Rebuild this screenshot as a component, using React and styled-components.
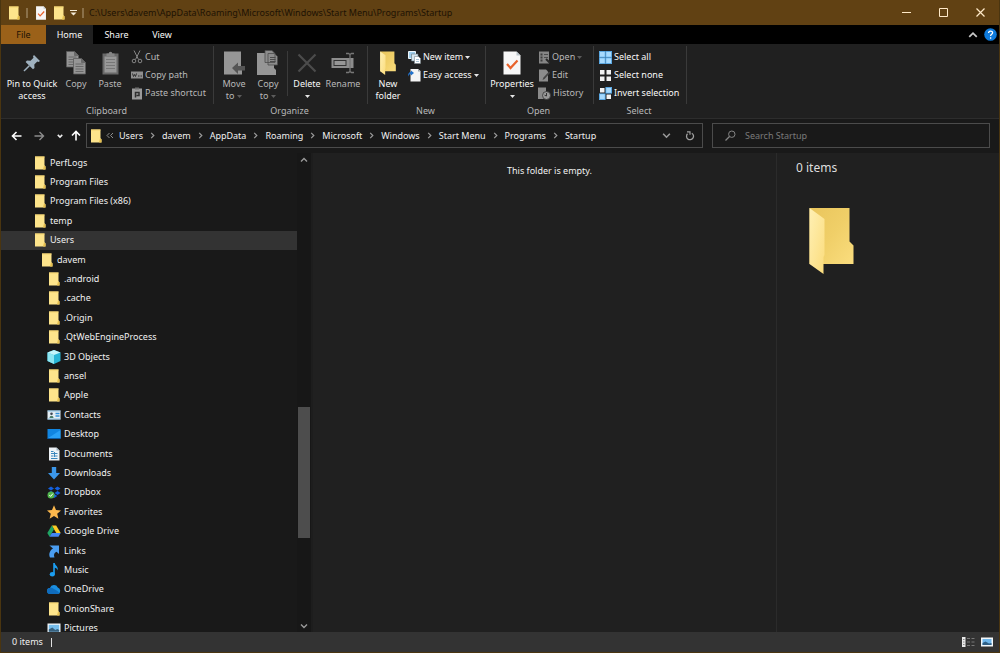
import React from 'react';
import styled, { createGlobalStyle } from 'styled-components';

const GlobalStyle = createGlobalStyle`
    * {
        box-sizing: border-box;
    }
    body {
        margin: 0;
        background: #000;
    }
    button, input {
        font: inherit;
        color: inherit;
        background: none;
        border: 0;
        padding: 0;
        margin: 0;
    }
    svg {
        display: block;
        flex: none;
    }
`
const Window = styled.div`
    height: 100vh;
    display: flex;
    flex-direction: column;
    background: #191919;
    border: 1px solid #4a3510;
    border-top: 0;
    color: #f0f0f0;
    font-family: "Noto Sans", "Open Sans", sans-serif;
    font-size: 9px;
    line-height: 12px;
`
const TitleBar = styled.header`
    display: flex;
    align-items: center;
    height: 25px;
    flex: none;
    padding-left: 6px;
    background: #614113;
`
const QuickButton = styled.button`
    display: flex;
    margin-right: ${({ $gap }) => $gap || 0}px;
`
const TitleMark = styled.span`
    width: 2px;
    height: 10px;
    margin-right: ${({ $gap }) => $gap || 0}px;
    background: #8a7049;
`
const Title = styled.h1`
    flex: 1;
    margin: 0;
    font-size: 9px;
    font-weight: 400;
    line-height: 12px;
    color: #1d1204;
    white-space: nowrap;
`
const WindowButton = styled.button`
    display: flex;
    align-items: center;
    justify-content: center;
    width: 37px;
    height: 25px;
`
const Tabs = styled.nav`
    display: flex;
    align-items: stretch;
    height: 19px;
    flex: none;
    background: #000;
`
const Tab = styled.button`
    width: ${({ $width }) => $width || 47}px;
    color: ${({ $file }) => ($file ? '#1d1204' : '#f8f8f8')};
    background: ${({ $file, $active }) => ($file ? '#9b6119' : $active ? '#202020' : 'none')};
`
const TabTools = styled.div`
    display: flex;
    align-items: center;
    gap: 6px;
    margin-left: auto;
    padding-right: 2px;
`
const Ribbon = styled.section`
    display: flex;
    height: 75px;
    flex: none;
    padding: 2px 0 0 1px;
    background: #202020;
    border-bottom: 1px solid #2d2d2d;
`
const Group = styled.div`
    display: flex;
    flex-direction: column;
    width: ${({ $width }) => $width}px;
    padding: 2px 3px 0;
    background: linear-gradient(#3a3a3a, #3a3a3a) right top / 1px 58px no-repeat;
`
const GroupBody = styled.div`
    display: flex;
    height: 54px;
`
const GroupName = styled.div`
    padding: 3px 3px 0 0;
    text-align: center;
    color: #b8b8b8;
`
const BigButton = styled.button`
    display: flex;
    flex-direction: column;
    align-items: center;
    flex: none;
    width: ${({ $width }) => $width}px;
    white-space: nowrap;
    color: ${({ $dim }) => ($dim ? '#b8b8b8' : '#f8f8f8')};
`
const BigIcon = styled.span`
    display: flex;
    align-items: center;
    height: 30px;
`
const CaretLine = styled.span`
    display: flex;
    align-items: center;
    justify-content: center;
    gap: 3px;
    height: 12px;
`
const Divider = styled.span`
    width: 1px;
    height: 45px;
    margin: 3px 2px 0;
    background: #3a3a3a;
`
const SmallList = styled.div`
    display: flex;
    flex-direction: column;
    padding-left: ${({ $pad }) => $pad || 4}px;
`
const SmallButton = styled.button`
    display: flex;
    align-items: center;
    gap: 2px;
    height: 18px;
    white-space: nowrap;
    color: ${({ $dim }) => ($dim ? '#b8b8b8' : '#f8f8f8')};
`
const AddressRow = styled.div`
    display: flex;
    align-items: center;
    flex: none;
    height: 34px;
    padding: 0 9px 1px 8px;
`
const NavButton = styled.button`
    display: flex;
    justify-content: center;
    width: ${({ $width }) => $width}px;
`
const AddressBox = styled.div`
    display: flex;
    align-items: center;
    flex: 1;
    height: 25px;
    margin-right: 9px;
    padding: 0 3px 0 2px;
    border: 1px solid #4b4b4b;
`
const Crumbs = styled.ol`
    display: flex;
    align-items: center;
    flex: 1;
    margin: 0;
    padding: 0 0 0 3px;
    list-style: none;
`
const Crumb = styled.li`
    display: flex;
    align-items: center;
    white-space: nowrap;
`
const CrumbArrow = styled.span`
    display: flex;
    justify-content: center;
    width: 19px;
`
const SearchBox = styled.label`
    display: flex;
    align-items: center;
    gap: 9px;
    width: 278px;
    height: 25px;
    padding-left: 12px;
    border: 1px solid #4b4b4b;
`
const SearchInput = styled.input`
    flex: 1;
    min-width: 0;
    outline: 0;
    &::placeholder {
        color: #7a7a7a;
        opacity: 1;
    }
`
const Body = styled.div`
    display: flex;
    flex: 1;
    min-height: 0;
`
const Sidebar = styled.aside`
    display: flex;
    width: 312px;
    flex: none;
    overflow: hidden;
    border-right: 2px solid #1d1d1d;
`
const Tree = styled.ul`
    display: grid;
    grid-auto-rows: 1fr;
    flex: 1;
    height: calc(100% + 6px);
    margin: 0;
    padding: 0;
    list-style: none;
`
const TreeItem = styled.li`
    display: flex;
    padding-left: ${({ $level }) => 32 + $level * 7}px;
    background: ${({ $selected }) => ($selected ? '#333333' : 'none')};
`
const TreeButton = styled.button`
    display: flex;
    align-items: center;
    gap: 3px;
    white-space: nowrap;
`
const ScrollBar = styled.div`
    display: flex;
    flex-direction: column;
    align-items: center;
    width: 14px;
    padding: 3px 0 2px;
    background: #171717;
`
const ScrollTrack = styled.div`
    display: flex;
    flex-direction: column;
    flex: 1;
    width: 12px;
`
const ScrollSpace = styled.div`
    flex: ${({ $grow }) => $grow};
`
const ScrollThumb = styled(ScrollSpace)`
    background: #4d4d4d;
`
const Files = styled.main`
    flex: 1;
    padding: 12px 0 0 10px;
    background: #202020;
    text-align: center;
`
const Details = styled.aside`
    width: 223px;
    padding: 6px 0 0 19px;
    background: #202020;
    border-left: 1px solid #2b2b2b;
`
const DetailsTitle = styled.h2`
    margin: 0 0 30px;
    font-size: 12px;
    font-weight: 400;
    line-height: 18px;
    color: #dedede;
`
const DetailsPreview = styled.div`
    padding-left: 13px;
`
const StatusBar = styled.footer`
    display: flex;
    align-items: center;
    height: 20px;
    flex: none;
    padding: 0 6px 0 11px;
    background: #333333;
`
const StatusMark = styled.span`
    width: 1px;
    height: 9px;
    margin-left: 8px;
    background: #e0e0e0;
`
const ViewButtons = styled.div`
    display: flex;
    gap: 6px;
    margin-left: auto;
`

const Caret = ({ color = '#e6e6e6' }) => (
    <svg width="5" height="3" viewBox="0 0 5 3"><path d="M0 0h5L2.5 3z" fill={color} /></svg>
)
const Chevron = ({ dir = 'down', color = '#9a9a9a', size = 8, width = 1.4 }) => {
    const turn = { down: 0, up: 180, right: -90 }[dir]
    return (
        <svg width={size} height={size} viewBox="0 0 8 8">
            <path d="M1 2.5L4 5.5L7 2.5" fill="none" stroke={color} strokeWidth={width} transform={`rotate(${turn} 4 4)`} />
        </svg>
    )
}
const FolderIcon = ({ width = 14, height = 14 }) => (
    <svg width={width} height={height} viewBox="0 0 14 14">
        <path d="M2 .5h9.5v8.800l1 1v3.200H2z" fill="#fde48b" />
        <path d="M11 9.500l1.500 1v3H10z" fill="#e6bf4e" />
        <path d="M2 .5h9.500v1H2z" fill="#f3d36c" />
    </svg>
)
const OpenFolder = ({ width, height }) => (
    <svg width={width} height={height} viewBox="0 0 45 67">
        <defs>
            <linearGradient id="folderBack" x1="0" y1="0" x2="1" y2="1">
                <stop offset="0" stopColor="#e9c55c" />
                <stop offset=".5" stopColor="#f0cf68" />
                <stop offset="1" stopColor="#fadd7e" />
            </linearGradient>
            <linearGradient id="folderFront" x1="0" y1="0" x2="1" y2="1">
                <stop offset="0" stopColor="#fff0b4" />
                <stop offset="1" stopColor="#fbdc7c" />
            </linearGradient>
        </defs>
        <path d="M.5 1H40.500V34.500L44.500 38.500V57H.5z" fill="url(#folderBack)" />
        <path d="M.5 1L15.500 12V48L14.500 50V67L.5 57z" fill="url(#folderFront)" />
    </svg>
)
const PropsIcon = ({ width, height }) => (
    <svg width={width} height={height} viewBox="0 0 18 24">
        <path d="M.5.500h13l4 4v19H.5z" fill="#f6f6f6" />
        <path d="M13.500.5v4h4z" fill="#b9c3c9" />
        <path d="M4 13l3.500 4L14.500 9.500" fill="none" stroke="#e8622a" strokeWidth="2.200" />
    </svg>
)
const PinIcon = () => (
    <svg width="18" height="18" viewBox="0 0 18 18">
        <path d="M11 1l6 6-1.500 1-1.200-.5-3 3 .2 3.500-1.500 1.300-7.400-7.400L4 6.500l3.500.2 3-3L10 2.300z" fill="#9fb1bf" />
        <path d="M6.300 11.700L1 17" stroke="#9fb1bf" strokeWidth="1.500" />
    </svg>
)
const Sheet = ({ x, y }) => (
    <g transform={`translate(${x} ${y})`}>
        <path d="M.5.500h8l4 4v11.500H.5z" fill="#959595" stroke="#5c5c5c" strokeWidth=".8" />
        <path d="M8.500.5v4h4" fill="#6a6a6a" stroke="#5c5c5c" strokeWidth=".6" />
        <path d="M2.500 6h8M2.500 8.500h8M2.500 11h8M2.500 13.500h8" stroke="#696969" />
    </g>
)
const CopyIcon = () => (
    <svg width="20" height="24" viewBox="0 0 20 24">
        <Sheet x={0} y={0} />
        <Sheet x={7} y={7} />
    </svg>
)
const PasteIcon = () => (
    <svg width="17" height="24" viewBox="0 0 17 24">
        <path d="M.5 2.500h16v21H.5z" fill="#696969" />
        <path d="M2.500 5.500h12v16h-12z" fill="#989898" />
        <path d="M4.500 5V2.500h2.200a1.800 1.800 0 013.600 0h2.200V5z" fill="#858585" />
        <path d="M4 8.500h9M4 11.500h9M4 14.500h9M4 17.500h9" stroke="#777" />
    </svg>
)
const CutIcon = () => (
    <svg width="12" height="14" viewBox="0 0 12 14" fill="none" stroke="#858585">
        <path d="M3 .5l4.500 9M9 .500L4.500 9.500" />
        <circle cx="3" cy="11" r="1.800" />
        <circle cx="9" cy="11" r="1.800" />
    </svg>
)
const CopyPathIcon = () => (
    <svg width="12" height="12" viewBox="0 0 12 12">
        <path d="M0 2.500h12v7H0z" fill="#8f8f8f" />
        <path d="M1.500 4.500l1 3 1-2 1 2 1-3M7 7h1.500M9.500 7H11" fill="none" stroke="#2c2c2c" />
    </svg>
)
const PasteShortcutIcon = () => (
    <svg width="12" height="13" viewBox="0 0 12 13">
        <path d="M1 1.500h10v11H1z" fill="#9b9b9b" />
        <path d="M4 .5h4v2H4z" fill="#6e6e6e" />
        <path d="M4.500 10.500V5.500h3.500v3H5.500" fill="none" stroke="#2f2f2f" strokeWidth="1.500" />
    </svg>
)
const MoveToIcon = () => (
    <svg width="22" height="24" viewBox="0 0 22 24">
        <path d="M1 .5h17v17l1 1v5H1z" fill="#969696" />
        <path d="M9 17l6-5.500v3.500h7v4.500h-7V23z" fill="#555" />
    </svg>
)
const CopyToIcon = () => (
    <svg width="22" height="26" viewBox="0 0 22 26">
        <path d="M0 3h17v15l2 2v5H0z" fill="#969696" />
        <path d="M8 .5h7l3 3v9H8zM11 3.500h6.500l3 3v8.500H11z" fill="#8c8c8c" stroke="#4c4c4c" strokeWidth=".8" />
        <path d="M13 7.500h5.500M13 9.500h5.500M13 11.500h5.500" stroke="#4c4c4c" />
    </svg>
)
const DeleteIcon = () => (
    <svg width="20" height="20" viewBox="0 0 20 20">
        <path d="M1.500 1.500l17 17M18.500 1.500l-17 17" stroke="#4c4c4c" strokeWidth="2.200" />
    </svg>
)
const RenameIcon = () => (
    <svg width="24" height="22" viewBox="0 0 24 22">
        <path d="M.5 6h22v10H.5z" fill="#8d8d8d" />
        <path d="M2.500 8h13v6h-13z" fill="#333" />
        <path d="M3.500 9h11v4h-11z" fill="#969696" />
        <path d="M15 1.500h2.500l1.500 1 1.500-1H23M15 20.500h2.500l1.500-1 1.500 1H23M19 2v18" fill="none" stroke="#777" strokeWidth="1.300" />
    </svg>
)
const NewItemIcon = () => (
    <svg width="13" height="13" viewBox="0 0 13 13">
        <path d="M.5.500h7v7h-7z" fill="#9fcdec" stroke="#eef6fb" />
        <path d="M3.500 3h6.500v7H3.500z" fill="#d7e6ee" stroke="#61757f" strokeWidth=".6" />
        <path d="M6.500 5.500h4l2 2v5h-6z" fill="#fff" stroke="#7a878e" strokeWidth=".6" />
        <path d="M8 8.500h3M8 10.500h3" stroke="#90b4ca" strokeWidth=".8" />
    </svg>
)
const EasyAccessIcon = () => (
    <svg width="13" height="14" viewBox="0 0 13 14">
        <path d="M2.500 1H10l2.500 2v10.500h-10z" fill="#f4f4f4" />
        <path d="M10 1v2.500h2.500z" fill="#9aa6ad" />
        <path d="M0 8.500c0-3 .8-4.300 3-4.500V2.500L6 5 3 7.500V6C1.800 6 .8 6.800 0 8.500z" fill="#2272cc" />
    </svg>
)
const OpenIcon = () => (
    <svg width="12" height="13" viewBox="0 0 12 13">
        <path d="M1 .5h10v12H1z" fill="#868686" />
        <path d="M2.500 2.500h2v2h-2zM2.500 5.500h2v2h-2zM2.500 8.500h2v2h-2z" fill="#3e3e3e" />
        <path d="M6 3.500h4M6 6.500h4" stroke="#4c4c4c" />
        <path d="M8 8l4 4" stroke="#2a2a2a" strokeWidth="2" />
    </svg>
)
const EditIcon = () => (
    <svg width="12" height="13" viewBox="0 0 12 13">
        <path d="M1 .5h7l2 2v10H1z" fill="#8c8c8c" />
        <path d="M4.500 11l1-2.500L11 2.500l1.200 1.300L6.500 10z" fill="#444" />
    </svg>
)
const HistoryIcon = () => (
    <svg width="13" height="13" viewBox="0 0 13 13">
        <path d="M0 .5h8v9l1 1v1.500H0z" fill="#8a8a8a" />
        <circle cx="8.500" cy="8.500" r="4" fill="#999" stroke="#333" strokeWidth=".8" />
        <path d="M8.500 6v3l-2-.8" fill="none" stroke="#333" />
    </svg>
)
const SelectIcon = ({ blue = [] }) => (
    <svg width="13" height="13" viewBox="0 0 13 13">
        {[[0, 0], [6.5, 0], [0, 6.5], [6.5, 6.5]].map(([x, y], i) => (
            blue.includes(i)
                ? <rect key={i} x={x + 0.4} y={y + 0.4} width="5.700" height="5.700" fill="#a8dafd" stroke="#58aef0" strokeWidth=".8" />
                : <rect key={i} x={x + 1} y={y + 1} width="4.500" height="4.500" fill="#f2f2f2" />
        ))}
    </svg>
)

const treeIcons = {
    cube: (
        <>
            <path d="M7 0l6.500 2.500v8.500L7 14 .5 11V2.500z" fill="#29b6d6" />
            <path d="M.5 2.500L7 5v9L.5 11z" fill="#8ce6f2" />
            <path d="M7 0l6.500 2.500L7 5 .5 2.500z" fill="#c4f5fa" />
        </>
    ),
    contacts: (
        <>
            <path d="M.5 2.500h13v9H.5z" fill="#e4eef5" />
            <path d="M.5 2.500h13v1H.5zM.5 10.500h13v1H.5z" fill="#82bbe0" />
            <circle cx="4.500" cy="5.800" r="1.300" fill="#3b4652" />
            <path d="M2.500 10c0-3 4-3 4 0z" fill="#4b7d69" />
            <path d="M8.500 5.500h4M8.500 8h4" stroke="#3190d8" strokeWidth="1.300" />
        </>
    ),
    desktop: (
        <>
            <path d="M.5 2h13v9.500H.5z" fill="#1185e0" />
            <path d="M.5 11.500L13.500 3v8.500z" fill="#29a0f5" />
            <path d="M.5 11h13v1H.5z" fill="#0c5da5" />
        </>
    ),
    documents: (
        <>
            <path d="M2 .5h7.500l3 3v10H2z" fill="#edf2f6" />
            <path d="M9.500.5v3h3z" fill="#9fb3c1" />
            <path d="M4 4.500h2.500M4 6.500h6.500M4 9h2.500M8 9h2.500M4 11.500h6.500M7.500 5v5" stroke="#3a86bd" />
        </>
    ),
    downloads: <path d="M4.800 1h4.400v6H13L7 13.500 1 7h3.800z" fill="#3b97ea" />,
    dropbox: (
        <>
            <path d="M4 1.500l3 2-3 2-3-2zM10.500 1.500l3 2-3 2-3-2zM4 6l3 2-3 2-3-2zM10.500 6l3 2-3 2-3-2zM7.300 9l3 2-3 2-3-2z" fill="#1461e0" />
            <circle cx="4" cy="10" r="3.500" fill="#52b54b" />
            <path d="M2.300 10l1.300 1.400 2.300-2.800" fill="none" stroke="#fff" />
        </>
    ),
    favorites: <path d="M7 .3l2 4.600 5 .5-3.800 3.300 1.200 5L7 11.100l-4.400 2.600 1.200-5L0 5.400l5-.5z" fill="#fdb94d" />,
    drive: (
        <>
            <path d="M4.800 1.500h4.400l4.500 7.500H9.300z" fill="#fbc924" />
            <path d="M4.800 1.500L7 5.300 2.500 12.700.3 9z" fill="#1fa463" />
            <path d="M4.800 9h8.900l-2.200 3.700h-9z" fill="#4285f4" />
        </>
    ),
    links: <path d="M2.500 1.500h9.500V10L9.500 7.800C7 9 6.500 11 7.500 13.500H3C1.500 10.500 2.500 6.500 6 4.500z" fill="#4a9df0" />,
    music: (
        <>
            <path d="M6.200 0h1.600c.3 2.600 3.700 3.200 3 7.500-.6-2-1.800-2.700-3-2.800V11H6.200z" fill="#1b9df0" />
            <ellipse cx="5.300" cy="11.200" rx="2.600" ry="2.200" fill="#1b9df0" />
        </>
    ),
    onedrive: (
        <>
            <path d="M3 6a4.200 4.200 0 017.800-.6A3.500 3.500 0 0111 12H3.200A3 3 0 013 6z" fill="#1a8ee0" />
            <path d="M3 6c2-.6 3 .4 8 3.600l1.500 1.900c-.4.400-.9.500-1.500.5H3.200A3 3 0 013 6z" fill="#0f6cbd" />
        </>
    ),
    pictures: (
        <>
            <path d="M.5 2.500h13v9.500H.5z" fill="#f2f6f8" />
            <path d="M1.800 3.800h10.400v6.900H1.800z" fill="#75bdec" />
            <path d="M1.800 8.500l3.500-2 3 2.500 2-1 1.900 1v1.700H1.800z" fill="#37607c" />
        </>
    ),
}

const TreeIcon = ({ name }) => (
    name === 'folder' ? <FolderIcon /> : <svg width="14" height="14" viewBox="0 0 14 14">{treeIcons[name]}</svg>
)

const treeItems = [
    ['PerfLogs', 0],
    ['Program Files', 0],
    ['Program Files (x86)', 0],
    ['temp', 0],
    ['Users', 0],
    ['davem', 1],
    ['.android', 2],
    ['.cache', 2],
    ['.Origin', 2],
    ['.QtWebEngineProcess', 2],
    ['3D Objects', 2, 'cube'],
    ['ansel', 2],
    ['Apple', 2],
    ['Contacts', 2, 'contacts'],
    ['Desktop', 2, 'desktop'],
    ['Documents', 2, 'documents'],
    ['Downloads', 2, 'downloads'],
    ['Dropbox', 2, 'dropbox'],
    ['Favorites', 2, 'favorites'],
    ['Google Drive', 2, 'drive'],
    ['Links', 2, 'links'],
    ['Music', 2, 'music'],
    ['OneDrive', 2, 'onedrive'],
    ['OnionShare', 2],
    ['Pictures', 2, 'pictures'],
]
const crumbs = ['Users', 'davem', 'AppData', 'Roaming', 'Microsoft', 'Windows', 'Start Menu', 'Programs', 'Startup']

const Big = ({ icon, label, second, caret, width, dim }) => (
    <BigButton $width={width} $dim={dim}>
        <BigIcon>{icon}</BigIcon>
        <span>{label}</span>
        {(second || caret) && (
            <CaretLine>
                {second}
                {caret && <Caret color={dim ? '#5c5c5c' : '#e6e6e6'} />}
            </CaretLine>
        )}
    </BigButton>
)
const Small = ({ icon, label, caret, dim }) => (
    <SmallButton $dim={dim}>
        {icon}
        <span>{label}</span>
        {caret && <Caret color={dim ? '#5c5c5c' : '#e6e6e6'} />}
    </SmallButton>
)

const Header = () => (
    <>
        <TitleBar>
            <QuickButton aria-label="Startup" $gap={5}><FolderIcon /></QuickButton>
            <TitleMark $gap={7} />
            <QuickButton aria-label="Properties" $gap={5}><PropsIcon width={12} height={14} /></QuickButton>
            <QuickButton aria-label="New folder" $gap={4}><FolderIcon /></QuickButton>
            <QuickButton aria-label="Customize toolbar" $gap={5}>
                <svg width="7" height="6" viewBox="0 0 7 6"><path d="M0 0h7v1H0zM.5 2.500h6L3.500 5.500z" fill="#f3ead8" /></svg>
            </QuickButton>
            <TitleMark $gap={5} />
            <Title>C:\Users\davem\AppData\Roaming\Microsoft\Windows\Start Menu\Programs\Startup</Title>
            <WindowButton aria-label="Minimize">
                <svg width="9" height="9" viewBox="0 0 9 9"><path d="M0 4.500h9" stroke="#ffe9c8" /></svg>
            </WindowButton>
            <WindowButton aria-label="Maximize">
                <svg width="9" height="9" viewBox="0 0 9 9"><path d="M.5.500h8v8h-8z" fill="none" stroke="#ffe9c8" /></svg>
            </WindowButton>
            <WindowButton aria-label="Close">
                <svg width="9" height="9" viewBox="0 0 9 9"><path d="M.5.500l8 8M8.500.500l-8 8" stroke="#ffe9c8" strokeWidth="1.200" /></svg>
            </WindowButton>
        </TitleBar>
        <Tabs>
            <Tab $file $width={45}>File</Tab>
            <Tab $active>Home</Tab>
            <Tab>Share</Tab>
            <Tab $width={44}>View</Tab>
            <TabTools>
                <QuickButton aria-label="Minimize the ribbon"><Chevron dir="up" color="#c8c8c8" size={10} /></QuickButton>
                <QuickButton aria-label="Help">
                    <svg width="13" height="13" viewBox="0 0 13 13">
                        <circle cx="6.500" cy="6.500" r="6.300" fill="#0f7bdc" />
                        <path d="M4.600 5c0-2.600 4-2.500 4-.2 0 1.500-2 1.500-2 3.200M6.600 9.300v1.400" fill="none" stroke="#fff" strokeWidth="1.300" />
                    </svg>
                </QuickButton>
            </TabTools>
        </Tabs>
    </>
)

const Commands = () => (
    <Ribbon>
        <Group $width={212}>
            <GroupBody>
                <Big icon={<PinIcon />} label="Pin to Quick" second="access" width={54} />
                <Big icon={<CopyIcon />} label="Copy" width={34} dim />
                <Big icon={<PasteIcon />} label="Paste" width={34} dim />
                <SmallList>
                    <Small icon={<CutIcon />} label="Cut" dim />
                    <Small icon={<CopyPathIcon />} label="Copy path" dim />
                    <Small icon={<PasteShortcutIcon />} label="Paste shortcut" dim />
                </SmallList>
            </GroupBody>
            <GroupName>Clipboard</GroupName>
        </Group>
        <Group $width={154}>
            <GroupBody>
                <Big icon={<MoveToIcon />} label="Move" second="to" caret width={34} dim />
                <Big icon={<CopyToIcon />} label="Copy" second="to" caret width={34} dim />
                <Divider />
                <Big icon={<DeleteIcon />} label="Delete" caret width={34} />
                <Big icon={<RenameIcon />} label="Rename" width={38} dim />
            </GroupBody>
            <GroupName>Organize</GroupName>
        </Group>
        <Group $width={118}>
            <GroupBody>
                <Big icon={<OpenFolder width={16} height={24} />} label="New" second="folder" width={34} />
                <SmallList $pad={3}>
                    <Small icon={<NewItemIcon />} label="New item" caret />
                    <Small icon={<EasyAccessIcon />} label="Easy access" caret />
                </SmallList>
            </GroupBody>
            <GroupName>New</GroupName>
        </Group>
        <Group $width={108}>
            <GroupBody>
                <Big icon={<PropsIcon width={18} height={24} />} label="Properties" caret width={46} />
                <SmallList $pad={3}>
                    <Small icon={<OpenIcon />} label="Open" caret dim />
                    <Small icon={<EditIcon />} label="Edit" dim />
                    <Small icon={<HistoryIcon />} label="History" dim />
                </SmallList>
            </GroupBody>
            <GroupName>Open</GroupName>
        </Group>
        <Group $width={93}>
            <GroupBody>
                <SmallList $pad={2}>
                    <Small icon={<SelectIcon blue={[0, 1, 2, 3]} />} label="Select all" />
                    <Small icon={<SelectIcon />} label="Select none" />
                    <Small icon={<SelectIcon blue={[1, 2]} />} label="Invert selection" />
                </SmallList>
            </GroupBody>
            <GroupName>Select</GroupName>
        </Group>
    </Ribbon>
)

const Address = () => (
    <AddressRow>
        <NavButton $width={14} aria-label="Back">
            <svg width="11" height="10" viewBox="0 0 11 10"><path d="M10.500 5H1.500M5.500 1L1.500 5l4 4" fill="none" stroke="#fff" strokeWidth="1.600" /></svg>
        </NavButton>
        <NavButton $width={32} aria-label="Forward">
            <svg width="11" height="10" viewBox="0 0 11 10"><path d="M.5 5h9M5.500 1l4 4-4 4" fill="none" stroke="#8c8c8c" strokeWidth="1.400" /></svg>
        </NavButton>
        <NavButton $width={10} aria-label="Recent locations"><Chevron color="#eee" size={6} width={2} /></NavButton>
        <NavButton $width={21} aria-label="Up">
            <svg width="10" height="11" viewBox="0 0 10 11"><path d="M5 10.500v-9M1 5.500l4-4 4 4" fill="none" stroke="#fff" strokeWidth="1.600" /></svg>
        </NavButton>
        <AddressBox>
            <FolderIcon />
            <Crumbs>
                <Crumb>
                    <svg width="13" height="7" viewBox="0 0 13 7"><path d="M3.500 1L1 3.500 3.500 6M7 1L4.500 3.500 7 6" fill="none" stroke="#8f8f8f" /></svg>
                </Crumb>
                {crumbs.map((name, i) => (
                    <Crumb key={name}>
                        {i > 0 && <CrumbArrow><Chevron dir="right" size={7} /></CrumbArrow>}
                        <button>{name}</button>
                    </Crumb>
                ))}
            </Crumbs>
            <NavButton $width={30} aria-label="Previous locations"><Chevron size={9} /></NavButton>
            <NavButton $width={18} aria-label="Refresh">
                <svg width="10" height="10" viewBox="0 0 10 10">
                    <path d="M6.800 2.200A3.500 3.500 0 112.500 2.800" fill="none" stroke="#a0a0a0" strokeWidth="1.300" />
                    <path d="M2 .8h3v3" fill="none" stroke="#a0a0a0" strokeWidth="1.200" />
                </svg>
            </NavButton>
        </AddressBox>
        <SearchBox>
            <svg width="11" height="11" viewBox="0 0 11 11">
                <circle cx="6.800" cy="4.200" r="3.200" fill="none" stroke="#858585" />
                <path d="M4.500 6.500L.5 10.500" stroke="#858585" strokeWidth="1.200" />
            </svg>
            <SearchInput type="text" placeholder="Search Startup" aria-label="Search Startup" />
        </SearchBox>
    </AddressRow>
)

const App = () => {
    return (
        <Window>
            <GlobalStyle />
            <Header />
            <Commands />
            <Address />
            <Body>
                <Sidebar>
                    <Tree>
                        {treeItems.map(([name, level, icon = 'folder']) => (
                            <TreeItem key={name} $level={level} $selected={name === 'Users'}>
                                <TreeButton>
                                    <TreeIcon name={icon} />
                                    {name}
                                </TreeButton>
                            </TreeItem>
                        ))}
                    </Tree>
                    <ScrollBar>
                        <Chevron dir="up" />
                        <ScrollTrack>
                            <ScrollSpace $grow={243} />
                            <ScrollThumb $grow={131} />
                            <ScrollSpace $grow={84} />
                        </ScrollTrack>
                        <Chevron />
                    </ScrollBar>
                </Sidebar>
                <Files>This folder is empty.</Files>
                <Details>
                    <DetailsTitle>0 items</DetailsTitle>
                    <DetailsPreview>
                        <OpenFolder width={45} height={67} />
                    </DetailsPreview>
                </Details>
            </Body>
            <StatusBar>
                <span>0 items</span>
                <StatusMark />
                <ViewButtons>
                    <QuickButton aria-label="Details view">
                        <svg width="13" height="10" viewBox="0 0 13 10">
                            <path d="M0 0h3.500v10H0z" fill="#e8e8e8" />
                            <path d="M1 2.500h1.500M1 5h1.500M1 7.500h1.500" stroke="#888" />
                            <path d="M5 1.500h3M9.500 1.500h3M5 5h3M9.500 5h3M5 8.500h3M9.500 8.500h3" stroke="#777" />
                        </svg>
                    </QuickButton>
                    <QuickButton aria-label="Large icons view">
                        <svg width="12" height="10" viewBox="0 0 12 10">
                            <path d="M0 .5h12v9H0z" fill="#f4f7f9" />
                            <path d="M1.500 2h9v6h-9z" fill="#6fb7ec" />
                            <path d="M1.500 6l3-1.500L8 6.500l2.500-.5v2h-9z" fill="#2f5f85" />
                        </svg>
                    </QuickButton>
                </ViewButtons>
            </StatusBar>
        </Window>
    )
}


export default App
